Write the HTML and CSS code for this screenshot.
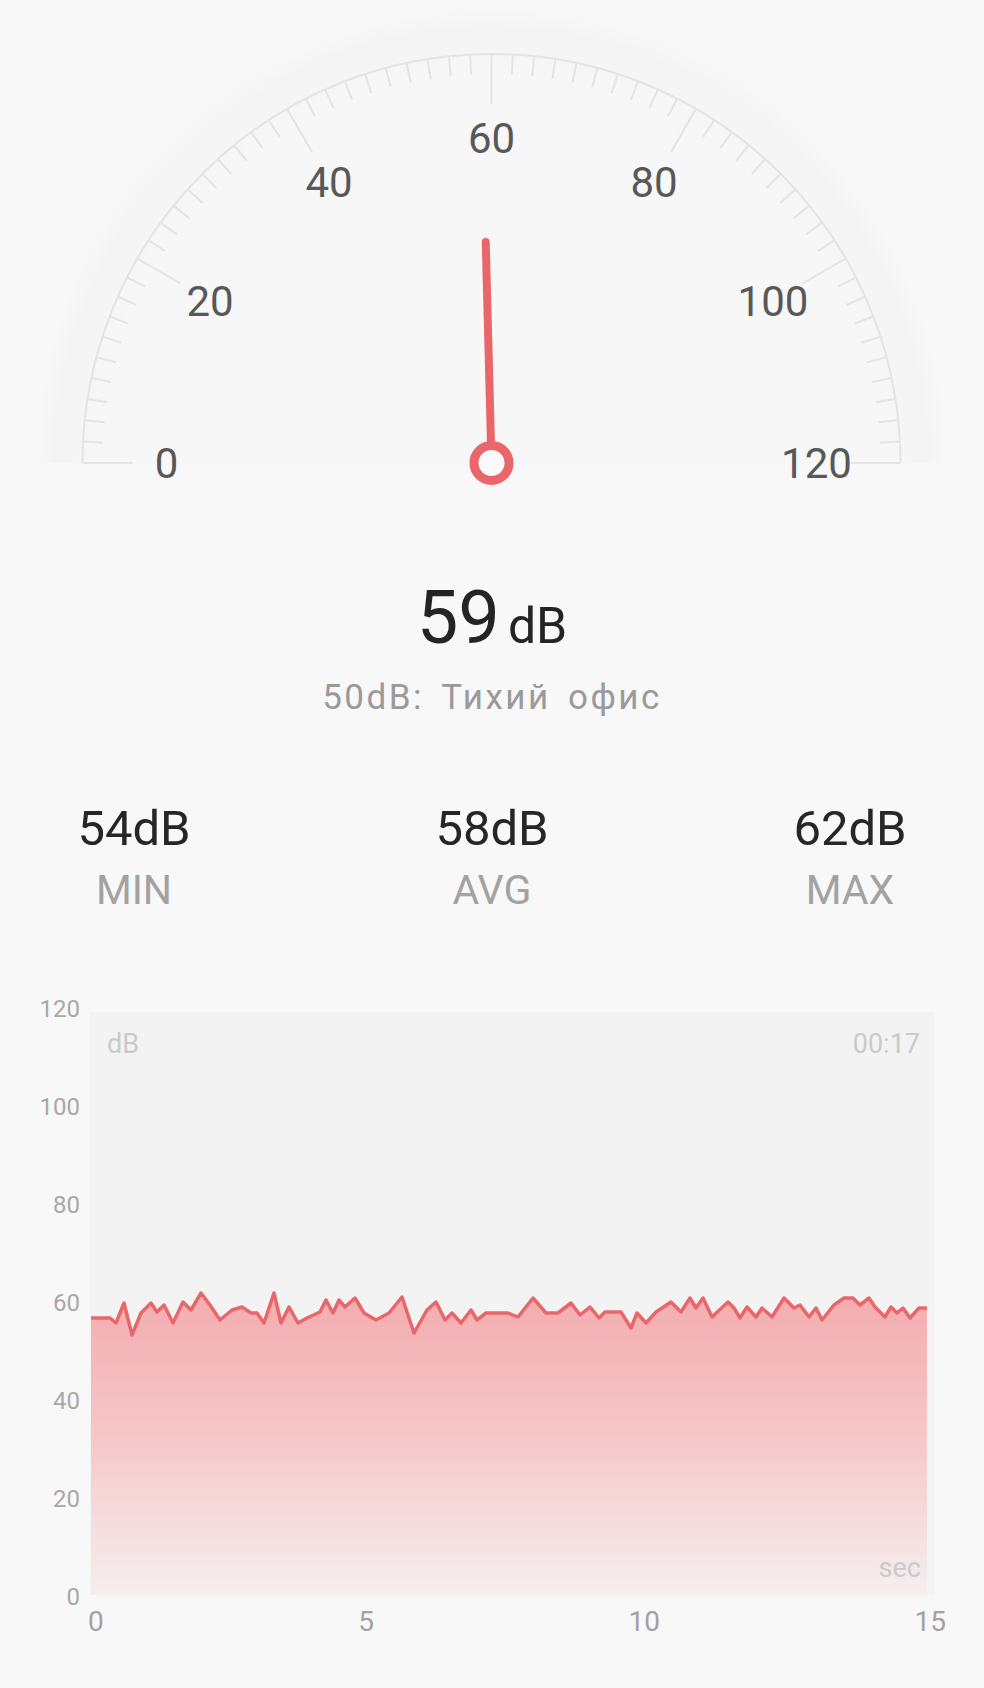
FILE: index.html
```html
<!DOCTYPE html>
<html lang="ru">
<head>
  <meta charset="UTF-8" />
  <title>Шумомер</title>
  <link rel="stylesheet" href="styles.css">
</head>
<body>

  <section class="gauge">
    <svg id="dial" class="dial" width="984" height="500" viewBox="0 0 984 500">
      <defs>
        <radialGradient id="halo" cx="491.5" cy="463" r="456" gradientUnits="userSpaceOnUse">
          <stop offset="0.86" stop-color="#f7f7f7" />
          <stop offset="0.95" stop-color="#f4f4f4" />
          <stop offset="1" stop-color="#f8f8f8" />
        </radialGradient>
      </defs>
      <path d="M35.5 463 A456 456 0 0 1 947.5 463 Z" fill="url(#halo)" />
      <path class="rim" d="M82.5 463 A409 409 0 0 1 900.5 463" />
      <g id="ticks" class="ticks"></g>
      <g id="dial-labels" class="dial-labels"></g>
      <line id="needle" class="needle" />
      <circle class="pin" cx="491.5" cy="463" r="17.5" />
    </svg>
  </section>

  <section class="reading">
    <div class="value"><span class="num">59</span><span class="unit">dB</span></div>
    <div class="hint">50dB: Тихий офис</div>
  </section>

  <section class="stats">
    <div class="stat">
      <div class="stat-value">54dB</div>
      <div class="stat-label">MIN</div>
    </div>
    <div class="stat">
      <div class="stat-value">58dB</div>
      <div class="stat-label">AVG</div>
    </div>
    <div class="stat">
      <div class="stat-value">62dB</div>
      <div class="stat-label">MAX</div>
    </div>
  </section>

  <section class="chart">
    <div class="y-axis">
      <span>120</span><span>100</span><span>80</span><span>60</span><span>40</span><span>20</span><span>0</span>
    </div>
    <div class="plot">
      <svg id="graph" width="845" height="583" viewBox="0 0 845 583">
        <defs>
          <linearGradient id="area" x1="0" y1="285" x2="0" y2="583" gradientUnits="userSpaceOnUse">
            <stop offset="0" stop-color="#f4adb0" />
            <stop offset="0.45" stop-color="#f5c6c8" />
            <stop offset="0.75" stop-color="#f5dcdd" />
            <stop offset="1" stop-color="#f5efef" />
          </linearGradient>
        </defs>
        <rect class="plot-bg" x="0" y="0" width="845" height="583" />
        <path id="area-fill" fill="url(#area)" />
        <path id="area-line" class="plot-line" />
        <text class="plot-note" x="17" y="41">dB</text>
        <text class="plot-note" x="830" y="41" text-anchor="end">00:17</text>
        <text class="plot-note" x="831" y="565" text-anchor="end">sec</text>
      </svg>
    </div>
    <div class="x-axis">
      <span>0</span><span>5</span><span>10</span><span>15</span>
    </div>
  </section>

  <script>
    const NS = 'http://www.w3.org/2000/svg';
    const cx = 491.5, cy = 463, rim = 409;

    // dial ticks, one every 2 dB, long ones every 20 dB
    const ticks = document.getElementById('ticks');
    for (let i = 0; i <= 60; i++) {
      const a = Math.PI - i * Math.PI / 60;
      const len = i % 10 === 0 ? 50 : 20;
      const line = document.createElementNS(NS, 'line');
      line.setAttribute('x1', cx + rim * Math.cos(a));
      line.setAttribute('y1', cy - rim * Math.sin(a));
      line.setAttribute('x2', cx + (rim - len) * Math.cos(a));
      line.setAttribute('y2', cy - (rim - len) * Math.sin(a));
      ticks.appendChild(line);
    }

    const labels = document.getElementById('dial-labels');
    for (let v = 0; v <= 120; v += 20) {
      const a = Math.PI - v / 120 * Math.PI;
      const text = document.createElementNS(NS, 'text');
      text.setAttribute('x', cx + 325 * Math.cos(a));
      text.setAttribute('y', cy - 325 * Math.sin(a) + 15);
      text.setAttribute('text-anchor', 'middle');
      text.textContent = v;
      labels.appendChild(text);
    }

    const level = 59;
    const na = Math.PI - level / 120 * Math.PI;
    const needle = document.getElementById('needle');
    needle.setAttribute('x1', cx + 22 * Math.cos(na));
    needle.setAttribute('y1', cy - 22 * Math.sin(na));
    needle.setAttribute('x2', cx + 221 * Math.cos(na));
    needle.setAttribute('y2', cy - 221 * Math.sin(na));

    // last 15 seconds of readings, in plot pixels
    const points = [
      [1, 306], [20, 306], [26, 311], [34, 291], [42, 323], [51, 301], [61, 291], [67, 300],
      [74, 293], [83, 311], [93, 290], [101, 298], [111, 281], [120, 293], [130, 308], [142, 298],
      [152, 295], [161, 301], [167, 301], [174, 311], [184, 281], [191, 311], [199, 295], [208, 311],
      [217, 306], [230, 300], [236, 288], [243, 301], [249, 288], [255, 295], [265, 286], [274, 301],
      [286, 308], [299, 301], [312, 285], [324, 321], [337, 298], [346, 290], [355, 308], [362, 301],
      [371, 311], [381, 298], [387, 308], [396, 301], [418, 301], [428, 305], [443, 286], [456, 301],
      [468, 301], [481, 291], [490, 303], [500, 295], [509, 306], [515, 300], [531, 300], [541, 316],
      [547, 301], [556, 311], [566, 300], [581, 290], [591, 300], [600, 286], [606, 296], [613, 286],
      [622, 305], [638, 290], [644, 296], [650, 306], [657, 295], [666, 305], [672, 296], [682, 305],
      [694, 286], [704, 296], [710, 293], [719, 305], [726, 296], [732, 308], [744, 293], [754, 286],
      [763, 286], [770, 293], [779, 286], [785, 295], [795, 305], [801, 295], [807, 301], [813, 296],
      [820, 306], [829, 296], [837, 296]
    ];
    const d = points.map((p, i) => (i ? 'L' : 'M') + p[0] + ' ' + p[1]).join(' ');
    document.getElementById('area-line').setAttribute('d', d);
    document.getElementById('area-fill').setAttribute('d', d + ' L837 583 L1 583 Z');
  </script>
</body>
</html>
```

FILE: styles.css
```css
* {
  margin: 0;
  padding: 0;
  box-sizing: border-box;
}

body {
  background: #f8f8f8;
  color: #222;
  font-family: Roboto, "Noto Sans", sans-serif;
  width: 984px;
  min-height: 1688px;
}

/* === Dial === */
.dial {
  display: block;
}

.rim {
  fill: none;
  stroke: #e4e4e4;
  stroke-width: 2;
}

.ticks line {
  stroke: #e4e4e4;
  stroke-width: 2;
}

.dial-labels text {
  font-family: Roboto, sans-serif;
  font-size: 42px;
  fill: #585858;
}

.needle {
  stroke: #e9676b;
  stroke-width: 8;
  stroke-linecap: round;
}

.pin {
  fill: #fafafa;
  stroke: #e9676b;
  stroke-width: 9;
}

/* === Current reading === */
.reading {
  margin-top: 78px;
  text-align: center;
}

.value {
  font-size: 74px;
  line-height: 80px;
  color: #242424;
}

.unit {
  font-size: 50px;
  line-height: 46px;
  margin-left: 8px;
}

.hint {
  margin-top: 20px;
  font-size: 35px;
  line-height: 40px;
  letter-spacing: 2.5px;
  word-spacing: 6px;
  color: #9a9a9a;
}

/* === Min / avg / max === */
.stats {
  display: grid;
  grid-template-columns: repeat(3, 200px);
  justify-content: space-between;
  padding: 0 34px;
  margin-top: 83px;
  text-align: center;
}

.stat-value {
  font-size: 49px;
  line-height: 56px;
  color: #262626;
}

.stat-label {
  margin-top: 9px;
  font-size: 41px;
  line-height: 48px;
  color: #a2a2a2;
}

/* === History chart === */
.chart {
  display: grid;
  grid-template-columns: 90px 845px;
  margin-top: 98px;
}

.y-axis {
  display: flex;
  flex-direction: column;
  justify-content: space-between;
  align-items: flex-end;
  padding-right: 10px;
  margin: -15px 0 -14px;
  font-size: 24px;
  line-height: 24px;
  color: #a8a8a8;
}

.plot svg {
  display: block;
}

.plot-bg {
  fill: #f3f3f3;
}

.plot-line {
  fill: none;
  stroke: #e9676b;
  stroke-width: 3.5;
  stroke-linejoin: round;
}

.plot-note {
  font-family: Roboto, sans-serif;
  font-size: 27px;
  fill: #cacaca;
}

.x-axis {
  grid-column: 2;
  display: flex;
  justify-content: space-between;
  margin: 11px -11px 0 -2px;
  font-size: 28px;
  line-height: 32px;
  color: #a2a2a2;
}
```
